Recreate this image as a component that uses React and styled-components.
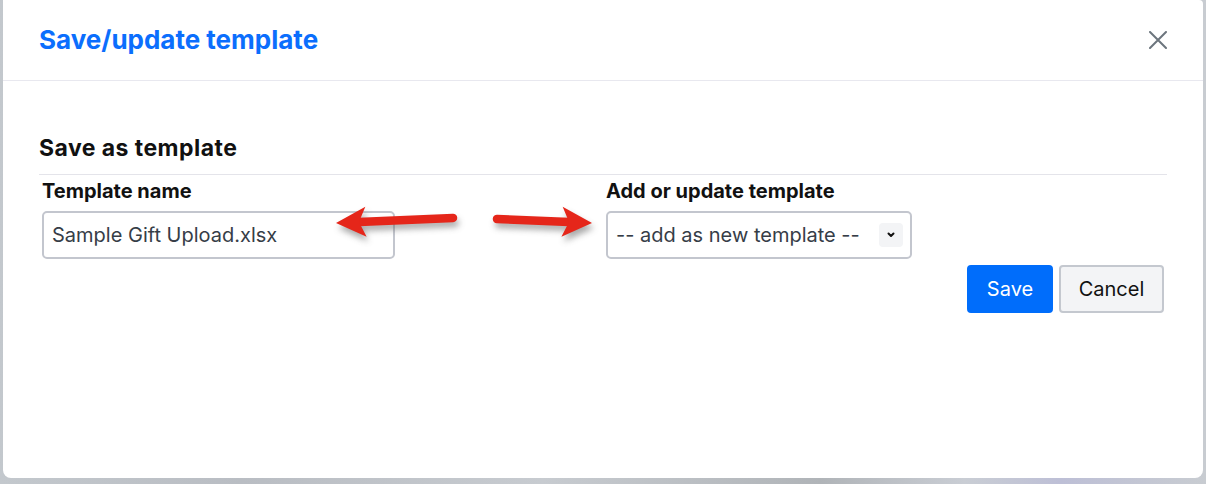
import React from "react";
import styled, { createGlobalStyle } from "styled-components";

const Global = createGlobalStyle`
  html, body { margin: 0; padding: 0; }
  body {
    width: 1206px;
    height: 484px;
    overflow: hidden;
    background: linear-gradient(90deg, #c3c8cd 0%, #b9bdc3 20%, #c7cbd0 45%, #b0b4b8 68%, #c9cdd4 80%, #bdbfd6 88%, #c8ccd1 100%);
    font-family: Inter, "Noto Sans", sans-serif;
  }
`;

const Backdrop = styled.div`
  padding: 0 3px 6px 3px;
  height: 484px;
  box-sizing: border-box;
`;

const Dialog = styled.div`
  width: 1200px;
  height: 478px;
  background: #fff;
  border-radius: 0 4px 8px 8px;
  display: flex;
  flex-direction: column;
`;

const Header = styled.div`
  height: 80px;
  border-bottom: 1px solid #e8e8ef;
  padding: 0 36px;
  display: flex;
  align-items: center;
  justify-content: space-between;
`;

const Title = styled.h1`
  margin: 0;
  font-size: 26px;
  line-height: 32px;
  font-weight: 700;
  color: #0b6efd;
`;

const CloseButton = styled.button`
  border: none;
  background: none;
  padding: 0;
  width: 18px;
  height: 18px;
  display: flex;
  align-items: center;
  justify-content: center;
`;

const Body = styled.div`
  padding: 53px 36px 0 36px;
`;

const SectionTitle = styled.h2`
  margin: 0;
  font-size: 23px;
  line-height: 28px;
  letter-spacing: 0.45px;
  font-weight: 700;
  color: #111;
  padding-bottom: 12px;
  border-bottom: 1px solid #e4e4ea;
`;

const Row = styled.div`
  display: grid;
  grid-template-columns: 564px 1fr;
  padding-top: 4px;
  position: relative;
`;

const Field = styled.div`
  display: flex;
  flex-direction: column;
  padding-left: 3px;
`;

const Label = styled.label`
  font-size: 20px;
  line-height: 24px;
  font-weight: 700;
  color: #111;
  margin-bottom: 8px;
`;

const Input = styled.div`
  box-sizing: border-box;
  width: ${(p) => p.$w}px;
  height: 48px;
  border: 2px solid #c3c6ce;
  border-radius: 5px;
  padding: 0 7px 0 8px;
  display: flex;
  align-items: center;
  justify-content: space-between;
  font-size: 20px;
  color: #363d47;
`;

const Chevron = styled.span`
  width: 24px;
  height: 24px;
  border-radius: 4px;
  background: #f3f4f6;
  display: flex;
  align-items: center;
  justify-content: center;
`;

const Actions = styled.div`
  display: flex;
  justify-content: flex-end;
  gap: 6px;
  padding: 6px 3px 0 0;
`;

const Button = styled.button`
  box-sizing: border-box;
  width: ${(p) => p.$w}px;
  height: 48px;
  padding: 0;
  border-radius: 4px;
  font-family: Inter, "Noto Sans", sans-serif;
  font-size: 20px;
  border: 2px solid ${(p) => (p.$primary ? "#006dfb" : "#c4c8cf")};
  background: ${(p) => (p.$primary ? "#006dfb" : "#f3f4f6")};
  color: ${(p) => (p.$primary ? "#fff" : "#111")};
`;

const Annotation = styled.svg`
  position: absolute;
  left: 0;
  top: 0;
  pointer-events: none;
  overflow: visible;
`;

function Arrow({ x1, y1, x2, y2 }) {
  const dx = x2 - x1;
  const dy = y2 - y1;
  const len = Math.hypot(dx, dy);
  const ux = dx / len;
  const uy = dy / len;
  const px = -uy;
  const py = ux;
  const headLen = 30;
  const headW = 15;
  const bx = x2 - ux * headLen;
  const by = y2 - uy * headLen;
  const nx = x2 - ux * (headLen - 7);
  const ny = y2 - uy * (headLen - 7);
  const head = `M${x2},${y2} L${bx + px * headW},${by + py * headW} L${nx},${ny} L${bx - px * headW},${by - py * headW} Z`;
  return (
    <g>
      <g filter="url(#sh)" opacity="0.5">
        <line x1={x1 + 2} y1={y1 + 5} x2={nx + 2} y2={ny + 5} stroke="#555" strokeWidth="8" strokeLinecap="round" />
        <path d={head} fill="#555" transform="translate(2 5)" />
      </g>
      <line x1={x1} y1={y1} x2={nx} y2={ny} stroke="#e5261a" strokeWidth="8.5" strokeLinecap="round" />
      <path d={head} fill="#e5261a" />
    </g>
  );
}

export default function App() {
  return (
    <>
      <Global />
      <Backdrop>
        <Dialog>
          <Header>
            <Title>Save/update template</Title>
            <CloseButton aria-label="Close">
              <svg width="18" height="18" viewBox="0 0 18 18">
                <path d="M1 1 L17 17 M17 1 L1 17" stroke="#6c757d" strokeWidth="2" strokeLinecap="round" />
              </svg>
            </CloseButton>
          </Header>
          <Body>
            <SectionTitle>Save as template</SectionTitle>
            <Row>
              <Field>
                <Label>Template name</Label>
                <Input $w={353}>Sample Gift Upload.xlsx</Input>
              </Field>
              <Field>
                <Label>Add or update template</Label>
                <Input $w={306}>
                  <span>-- add as new template --</span>
                  <Chevron>
                    <svg width="10" height="8" viewBox="0 0 10 8">
                      <path d="M2.5 2.5 L5 5 L7.5 2.5" fill="none" stroke="#111" strokeWidth="2" strokeLinecap="round" strokeLinejoin="round" />
                    </svg>
                  </Chevron>
                </Input>
              </Field>
              <Annotation width="600" height="80">
                <defs>
                  <filter id="sh" x="-20%" y="-50%" width="140%" height="200%">
                    <feGaussianBlur stdDeviation="3" />
                  </filter>
                </defs>
                <Arrow x1={414} y1={43} x2={297} y2={48} />
                <Arrow x1={458} y1={44} x2={553} y2={48} />
              </Annotation>
            </Row>
            <Actions>
              <Button $primary $w={86}>Save</Button>
              <Button $w={105}>Cancel</Button>
            </Actions>
          </Body>
        </Dialog>
      </Backdrop>
    </>
  );
}
